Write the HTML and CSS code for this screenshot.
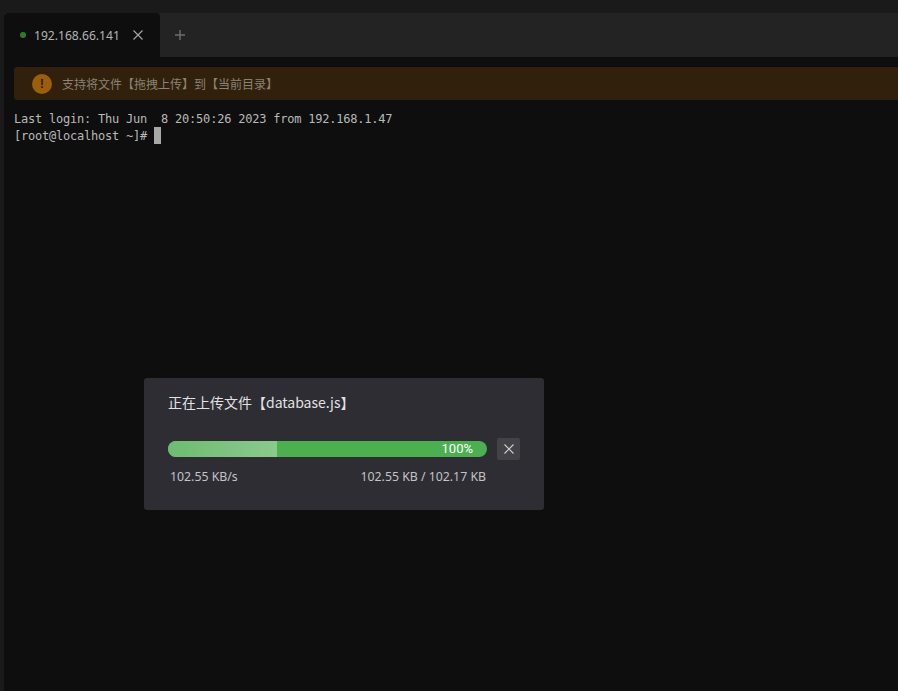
FILE: index.html
```html
<!DOCTYPE html>
<html lang="zh">
<head>
<meta charset="utf-8">
<title>Terminal</title>
<link rel="stylesheet" href="styles.css">
</head>
<body>
<div class="app">
  <div class="tabs">
    <div class="tab">
      <span class="dot"></span>
      <span class="tab-title">192.168.66.141</span>
      <svg class="tab-close" width="12" height="12" viewBox="0 0 12 12"><path d="M1.5 1.5l9 9M10.5 1.5l-9 9" stroke="#a8a8a8" stroke-width="1.1" fill="none"/></svg>
    </div>
    <div class="tab-add">
      <svg width="12" height="12" viewBox="0 0 12 12"><path d="M6 1v10M1 6h10" stroke="#6e6e6e" stroke-width="1.4" fill="none"/></svg>
    </div>
  </div>
  <div class="main">
    <div class="notice">
      <span class="notice-icon">!</span>
      <span class="notice-text">支持将文件【拖拽上传】到【当前目录】</span>
    </div>
    <pre class="term">Last login: Thu Jun  8 20:50:26 2023 from 192.168.1.47
[root@localhost ~]# <span class="cursor"></span></pre>
  </div>
  <div class="dialog">
    <div class="dialog-title">正在上传文件【database.js】</div>
    <div class="progress-row">
      <div class="bar">
        <div class="bar-glow"></div>
        <span class="bar-label">100%</span>
      </div>
      <div class="cancel">
        <svg width="12" height="12" viewBox="0 0 12 12"><path d="M1.5 1.5l9 9M10.5 1.5l-9 9" stroke="#d2d2d4" stroke-width="1.1" fill="none"/></svg>
      </div>
    </div>
    <div class="stats">
      <span>102.55 KB/s</span>
      <span>102.55 KB / 102.17 KB</span>
    </div>
  </div>
</div>
</body>
</html>
```
FILE: styles.css
```css
* { box-sizing: border-box; }
html, body { margin: 0; height: 100%; background: #1a1a1a; overflow: hidden; }
.app { position: relative; width: 898px; height: 691px; padding: 13px 0 0 4px; font-family: "Noto Sans CJK SC", "Noto Sans", sans-serif; }
.tabs { display: flex; height: 44px; background: #232323; }
.tab { width: 156px; display: flex; align-items: center; background: #0e0e0e; border-radius: 4px 4px 0 0; padding-left: 16px; }
.dot { width: 6px; height: 6px; border-radius: 50%; background: #2f7a32; margin-right: 8px; }
.tab-title { font-family: "Noto Sans", sans-serif; font-size: 12.1px; color: #b4b4b4; width: 98px; }
.tab-close { display: block; }
.tab-add { width: 40px; display: flex; align-items: center; justify-content: center; }
.main { height: 634px; background: #0e0e0e; padding: 10px 0 0 10px; }
.notice { height: 33px; display: flex; align-items: center; background: #30200c; border-radius: 3px 0 0 3px; padding-left: 18px; }
.notice-icon { width: 20px; height: 20px; border-radius: 50%; background: #9a5f08; color: #2a1a08; font: bold 13px/20px "Liberation Sans", sans-serif; text-align: center; margin-right: 10px; }
.notice-text { font-size: 12px; color: #8b8373; }
.term { margin: 11px 0 0; font: 12px/17px "DejaVu Sans Mono", monospace; letter-spacing: -0.22px; color: #b9b9b9; }
.cursor { display: inline-block; width: 7px; height: 17px; margin: -4px 0; background: #a8a8a8; }
.dialog { position: absolute; left: 144px; top: 378px; width: 400px; height: 132px; background: #2d2d33; border-radius: 3px; padding: 13px 24px 0; }
.dialog-title { font-size: 14px; line-height: 22px; color: #e2e2e3; }
.progress-row { display: flex; align-items: center; margin-top: 25px; gap: 10px; }
.bar { position: relative; width: 319px; height: 16px; background: #4caf50; border-radius: 8px; overflow: hidden; }
.bar-glow { position: absolute; left: 0; top: 0; bottom: 0; width: 109px; background: linear-gradient(90deg, #6ebc71, #8aca8d); }
.bar-label { position: absolute; right: 14px; top: 0; font: 13px/16px Roboto, sans-serif; color: #fff; }
.cancel { width: 23px; height: 22px; background: #434347; border-radius: 2px; display: flex; align-items: center; justify-content: center; }
.stats { width: 319px; display: flex; justify-content: space-between; padding: 0 1px 0 2px; margin-top: 8px; font: 12.3px/18px "Noto Sans", sans-serif; color: #c4c4c6; }
```
